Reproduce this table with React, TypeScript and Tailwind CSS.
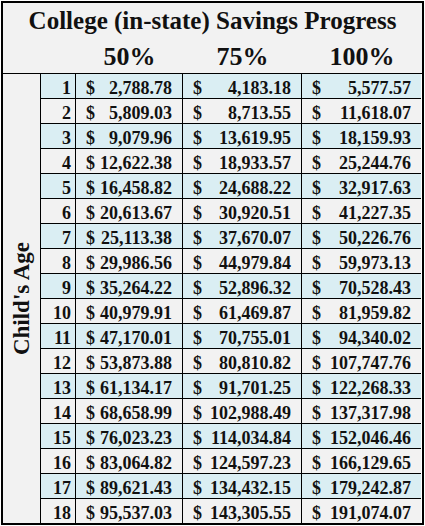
const rows: [number, string, string, string][] = [
  [1, '2,788.78', '4,183.18', '5,577.57'],
  [2, '5,809.03', '8,713.55', '11,618.07'],
  [3, '9,079.96', '13,619.95', '18,159.93'],
  [4, '12,622.38', '18,933.57', '25,244.76'],
  [5, '16,458.82', '24,688.22', '32,917.63'],
  [6, '20,613.67', '30,920.51', '41,227.35'],
  [7, '25,113.38', '37,670.07', '50,226.76'],
  [8, '29,986.56', '44,979.84', '59,973.13'],
  [9, '35,264.22', '52,896.32', '70,528.43'],
  [10, '40,979.91', '61,469.87', '81,959.82'],
  [11, '47,170.01', '70,755.01', '94,340.02'],
  [12, '53,873.88', '80,810.82', '107,747.76'],
  [13, '61,134.17', '91,701.25', '122,268.33'],
  [14, '68,658.99', '102,988.49', '137,317.98'],
  [15, '76,023.23', '114,034.84', '152,046.46'],
  [16, '83,064.82', '124,597.23', '166,129.65'],
  [17, '89,621.43', '134,432.15', '179,242.87'],
  [18, '95,537.03', '143,305.55', '191,074.07'],
];

function Money({ value, width, last }: { value: string; width: string; last?: boolean }) {
  return (
    <div className={`${width} ${last ? '' : 'border-r border-black'} flex items-end justify-between px-[10px] pb-[1px]`}>
      <span>$</span>
      <span>{value}</span>
    </div>
  );
}

export default function App() {
  return (
    <div className="min-h-screen bg-white pl-[1px] pt-[1px]">
      <div
        className="w-[423px] border-2 border-black text-[#111] font-bold"
        style={{ fontFamily: '"Liberation Serif", "Times New Roman", serif' }}
      >
        {/* Header */}
        <div className="h-[71px] bg-[#f2f2f2] border-b border-black pt-[5px]">
          <div className="text-center text-[25px] leading-[25px]">College (in-state) Savings Progress</div>
          <div className="flex mt-[11px] text-[26px] leading-[26px]">
            <div className="w-[73px]" />
            <div className="w-[107px] text-center">50%</div>
            <div className="w-[119px] text-center">75%</div>
            <div className="w-[120px] text-center">100%</div>
          </div>
        </div>

        {/* Body */}
        <div className="flex">
          <div className="w-[38px] bg-[#f2f2f2] border-r border-black flex items-center justify-center">
            <span className="-rotate-90 whitespace-nowrap text-[23px] leading-none">Child's Age</span>
          </div>
          <div className="flex flex-col">
            {rows.map(([age, a, b, c]) => (
              <div
                key={age}
                className={`flex h-[25px] border-b border-black last:h-[24px] last:border-b-0 text-[18px] leading-[18px] ${
                  age % 2 === 1 ? 'bg-[#daeef3]' : 'bg-[#f2f2f2]'
                }`}
              >
                <div className="w-[35px] border-r border-black flex items-end justify-end pr-[4px] pb-[1px]">{age}</div>
                <Money value={a} width="w-[107px]" />
                <Money value={b} width="w-[119px]" />
                <Money value={c} width="w-[119px]" last />
              </div>
            ))}
          </div>
        </div>
      </div>
    </div>
  );
}
